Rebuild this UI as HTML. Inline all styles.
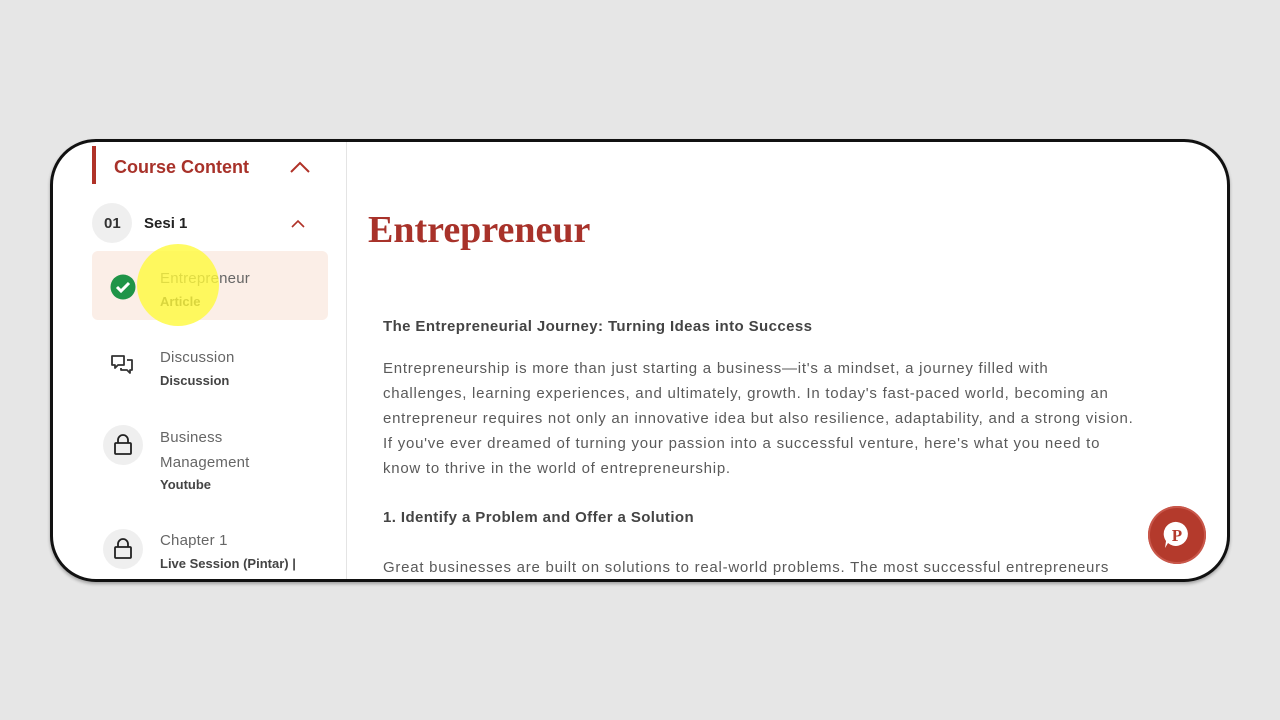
<!DOCTYPE html>
<html><head><meta charset="utf-8"><style>
*{margin:0;padding:0;box-sizing:border-box}
body{width:1280px;height:720px;background:#e6e6e6;position:relative;overflow:hidden;font-family:"Liberation Sans",sans-serif}
.frame{position:absolute;left:50px;top:139px;width:1180px;height:443px;background:#fff;border:3px solid #111;border-radius:46px;overflow:hidden;box-shadow:0 2px 3px rgba(0,0,0,.3)}
.abs{position:absolute;white-space:nowrap}
.side{position:absolute;left:0;top:0;width:294px;height:100%;border-right:1px solid #e4e4e4}
.red{color:#a8322a}
.t{font-size:15px;color:#666;letter-spacing:.2px}
.s{font-size:13px;font-weight:bold;color:#444}
.circ{position:absolute;width:40px;height:40px;border-radius:50%;background:#efefef}
.body{font-size:15px;color:#5a5a5a;line-height:25px;letter-spacing:.75px}
</style></head><body>
<div class="frame">
 <div class="side">
  <div class="abs" style="left:39px;top:4px;width:4px;height:38px;background:#b03228"></div>
  <div class="abs red" style="left:61px;top:15px;font-size:18px;font-weight:bold">Course Content</div>
  <svg class="abs" style="left:236px;top:18px" width="22" height="14"><path d="M2 12 L11 3 L20 12" fill="none" stroke="#b03228" stroke-width="2"/></svg>
  <div class="circ" style="left:39px;top:61px"></div>
  <div class="abs" style="left:51px;top:73px;font-size:15px;font-weight:bold;color:#333">01</div>
  <div class="abs" style="left:91px;top:73px;font-size:15px;font-weight:bold;color:#222">Sesi 1</div>
  <svg class="abs" style="left:237px;top:77px" width="16" height="10"><path d="M2 8 L8 2 L14 8" fill="none" stroke="#b03228" stroke-width="1.6"/></svg>
  <div class="abs" style="left:39px;top:109px;width:236px;height:69px;background:#fbeee7;border-radius:6px"></div>
  <svg class="abs" style="left:57px;top:132px" width="26" height="26"><circle cx="13" cy="13" r="12.5" fill="#1f9448"/><path d="M7 13 L11 17 L19 9" fill="none" stroke="#fff" stroke-width="3"/></svg>
  <div class="abs t" style="left:107px;top:128px">Entrepreneur</div>
  <div class="abs s" style="left:107px;top:152px">Article</div>
  <svg class="abs" style="left:57px;top:212px" width="26" height="24" fill="none" stroke="#333" stroke-width="1.8" stroke-linejoin="round"><path d="M2 2 H14 V11 H8 L5 14 V11 H2 Z"/><path d="M17 6 H22 V16 H20 V19 L17 16 H11 V14"/></svg>
  <div class="abs t" style="left:107px;top:207px">Discussion</div>
  <div class="abs s" style="left:107px;top:231px">Discussion</div>
  <div class="circ" style="left:50px;top:283px"></div>
  <svg class="abs" style="left:60px;top:292px" width="20" height="22" fill="none" stroke="#222" stroke-width="1.8"><rect x="2" y="9" width="16" height="11" rx="1"/><path d="M5 9 V6 A5 5 0 0 1 15 6 V9"/></svg>
  <div class="abs t" style="left:107px;top:283px;line-height:25px">Business<br>Management</div>
  <div class="abs s" style="left:107px;top:335px">Youtube</div>
  <div class="circ" style="left:50px;top:387px"></div>
  <svg class="abs" style="left:60px;top:396px" width="20" height="22" fill="none" stroke="#222" stroke-width="1.8"><rect x="2" y="9" width="16" height="11" rx="1"/><path d="M5 9 V6 A5 5 0 0 1 15 6 V9"/></svg>
  <div class="abs t" style="left:107px;top:390px">Chapter 1</div>
  <div class="abs s" style="left:107px;top:414px">Live Session (Pintar) |</div>
 </div>
 <div class="abs" style="left:84px;top:102px;width:82px;height:82px;border-radius:50%;background:rgba(255,250,60,.8)"></div>
 <div class="abs red" style="left:315px;top:66px;font-family:'Liberation Serif',serif;font-weight:bold;font-size:38px;color:#a8322a">Entrepreneur</div>
 <div class="abs" style="left:330px;top:176px;font-size:15px;font-weight:bold;color:#444;letter-spacing:.4px">The Entrepreneurial Journey: Turning Ideas into Success</div>
 <div class="abs body" style="left:330px;top:214px">Entrepreneurship is more than just starting a business—it's a mindset, a journey filled with<br>challenges, learning experiences, and ultimately, growth. In today's fast-paced world, becoming an<br>entrepreneur requires not only an innovative idea but also resilience, adaptability, and a strong vision.<br>If you've ever dreamed of turning your passion into a successful venture, here's what you need to<br>know to thrive in the world of entrepreneurship.</div>
 <div class="abs" style="left:330px;top:367px;font-size:15px;font-weight:bold;color:#444;letter-spacing:.4px">1. Identify a Problem and Offer a Solution</div>
 <div class="abs body" style="left:330px;top:413px">Great businesses are built on solutions to real-world problems. The most successful entrepreneurs</div>
 <div class="abs" style="left:1095px;top:364px;width:58px;height:58px;border-radius:50%;background:#b43a2c;box-shadow:0 0 0 2px #c9574a inset"></div>
 <svg class="abs" style="left:1109px;top:378px" width="30" height="30"><path d="M15 2 A12 12 0 1 1 6 23 L3 28 L4 21 A12 12 0 0 1 15 2Z" fill="#fff"/><text x="15" y="21" text-anchor="middle" font-family="Liberation Serif" font-weight="bold" font-size="17" fill="#b43a2c">P</text></svg>
</div>
</body></html>
